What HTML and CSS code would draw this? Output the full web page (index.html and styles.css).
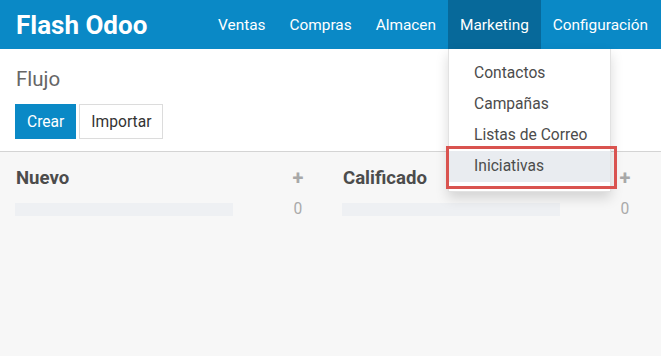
FILE: index.html
```html
<!DOCTYPE html>
<html lang="es">
<head>
    <meta charset="UTF-8">
    <title>Flujo - Flash Odoo</title>
    <link rel="stylesheet" href="styles.css">
</head>
<body>

    <header class="navbar">
        <div class="brand">Flash Odoo</div>
        <ul class="menu">
            <li>Ventas</li>
            <li>Compras</li>
            <li>Almacen</li>
            <li class="active">
                Marketing
                <ul class="dropdown">
                    <li>Contactos</li>
                    <li>Campañas</li>
                    <li>Listas de Correo</li>
                    <li class="hover">Iniciativas</li>
                </ul>
                <div class="mark"></div>
            </li>
            <li>Configuración</li>
        </ul>
    </header>

    <div class="control-panel">
        <h1>Flujo</h1>
        <div class="buttons">
            <button class="btn primary">Crear</button>
            <button class="btn">Importar</button>
        </div>
    </div>

    <div class="kanban">
        <div class="column">
            <div class="col-head">
                <span class="col-title">Nuevo</span>
                <span class="plus">+</span>
            </div>
            <div class="col-progress">
                <div class="bar"></div>
                <span class="count">0</span>
            </div>
        </div>
        <div class="column">
            <div class="col-head">
                <span class="col-title">Calificado</span>
                <span class="plus">+</span>
            </div>
            <div class="col-progress">
                <div class="bar"></div>
                <span class="count">0</span>
            </div>
        </div>
    </div>

</body>
</html>
```

FILE: styles.css
```css
body {
    font-family: Roboto, 'Noto Sans', sans-serif;
    margin: 0;
    padding: 0;
    background-color: #f7f7f7;
    width: 661px;
    height: 356px;
    overflow: hidden;
}

.navbar {
    display: flex;
    align-items: center;
    height: 49px;
    background-color: #0a89c6;
    color: #fff;
}

.brand {
    font-size: 26px;
    font-weight: bold;
    padding-left: 16px;
    width: 190px;
    flex-shrink: 0;
}

.menu {
    display: flex;
    flex-shrink: 0;
    list-style: none;
    margin: 0;
    padding: 0;
    height: 100%;
}

.menu > li {
    position: relative;
    display: flex;
    align-items: center;
    flex-shrink: 0;
    padding: 0 12px;
    font-size: 15.4px;
}

.menu > li.active {
    background-color: #07699a;
}

.dropdown {
    position: absolute;
    top: 49px;
    left: 0;
    width: 163px;
    margin: 0;
    padding: 9px 0;
    list-style: none;
    background-color: #fff;
    border: 1px solid #e2e2e2;
    border-top: none;
    box-shadow: 0 6px 12px rgba(0, 0, 0, 0.15);
    box-sizing: border-box;
    z-index: 10;
}

.dropdown li {
    height: 31px;
    line-height: 31px;
    padding-left: 25px;
    color: #4c4c4c;
    font-size: 15.6px;
}

.dropdown li.hover {
    background-color: #e9ecf0;
}

/* red highlight box around the last item */
.mark {
    position: absolute;
    top: 146px;
    left: -2px;
    width: 171px;
    height: 43px;
    border: 3px solid #d9534f;
    box-sizing: border-box;
    z-index: 11;
}

.control-panel {
    background-color: #fff;
    border-bottom: 1px solid #d4d4d4;
    padding: 17px 15px 12px;
}

.control-panel h1 {
    font-size: 20.5px;
    font-weight: normal;
    color: #666;
    margin: 0 0 12px 1px;
    line-height: 26px;
}

.buttons {
    display: flex;
    gap: 3px;
}

.btn {
    font-family: Roboto, 'Noto Sans', sans-serif;
    font-size: 15.6px;
    height: 35px;
    padding: 0 11px;
    border: 1px solid #dcdcdc;
    background-color: #fff;
    color: #333;
    border-radius: 0;
}

.btn.primary {
    background-color: #0a89c6;
    border-color: #0a89c6;
    color: #fff;
    padding: 0 11px;
}

.kanban {
    display: flex;
    gap: 38px;
    padding: 13px 15px 0;
}

.column {
    width: 289px;
}

.col-head {
    display: flex;
    justify-content: space-between;
    align-items: center;
    height: 25px;
    padding-left: 1px;
}

.col-title {
    font-size: 18.6px;
    font-weight: bold;
    color: #4c4c4c;
}

.plus {
    font-size: 20px;
    font-weight: bold;
    color: #a8a8a8;
    width: 12px;
    text-align: center;
}

.col-progress {
    display: flex;
    justify-content: space-between;
    align-items: center;
    margin-top: 10px;
}

.bar {
    width: 218px;
    height: 13px;
    background-color: #eef0f3;
}

.count {
    font-size: 15.6px;
    color: #aaa;
    width: 12px;
    text-align: center;
}
```
